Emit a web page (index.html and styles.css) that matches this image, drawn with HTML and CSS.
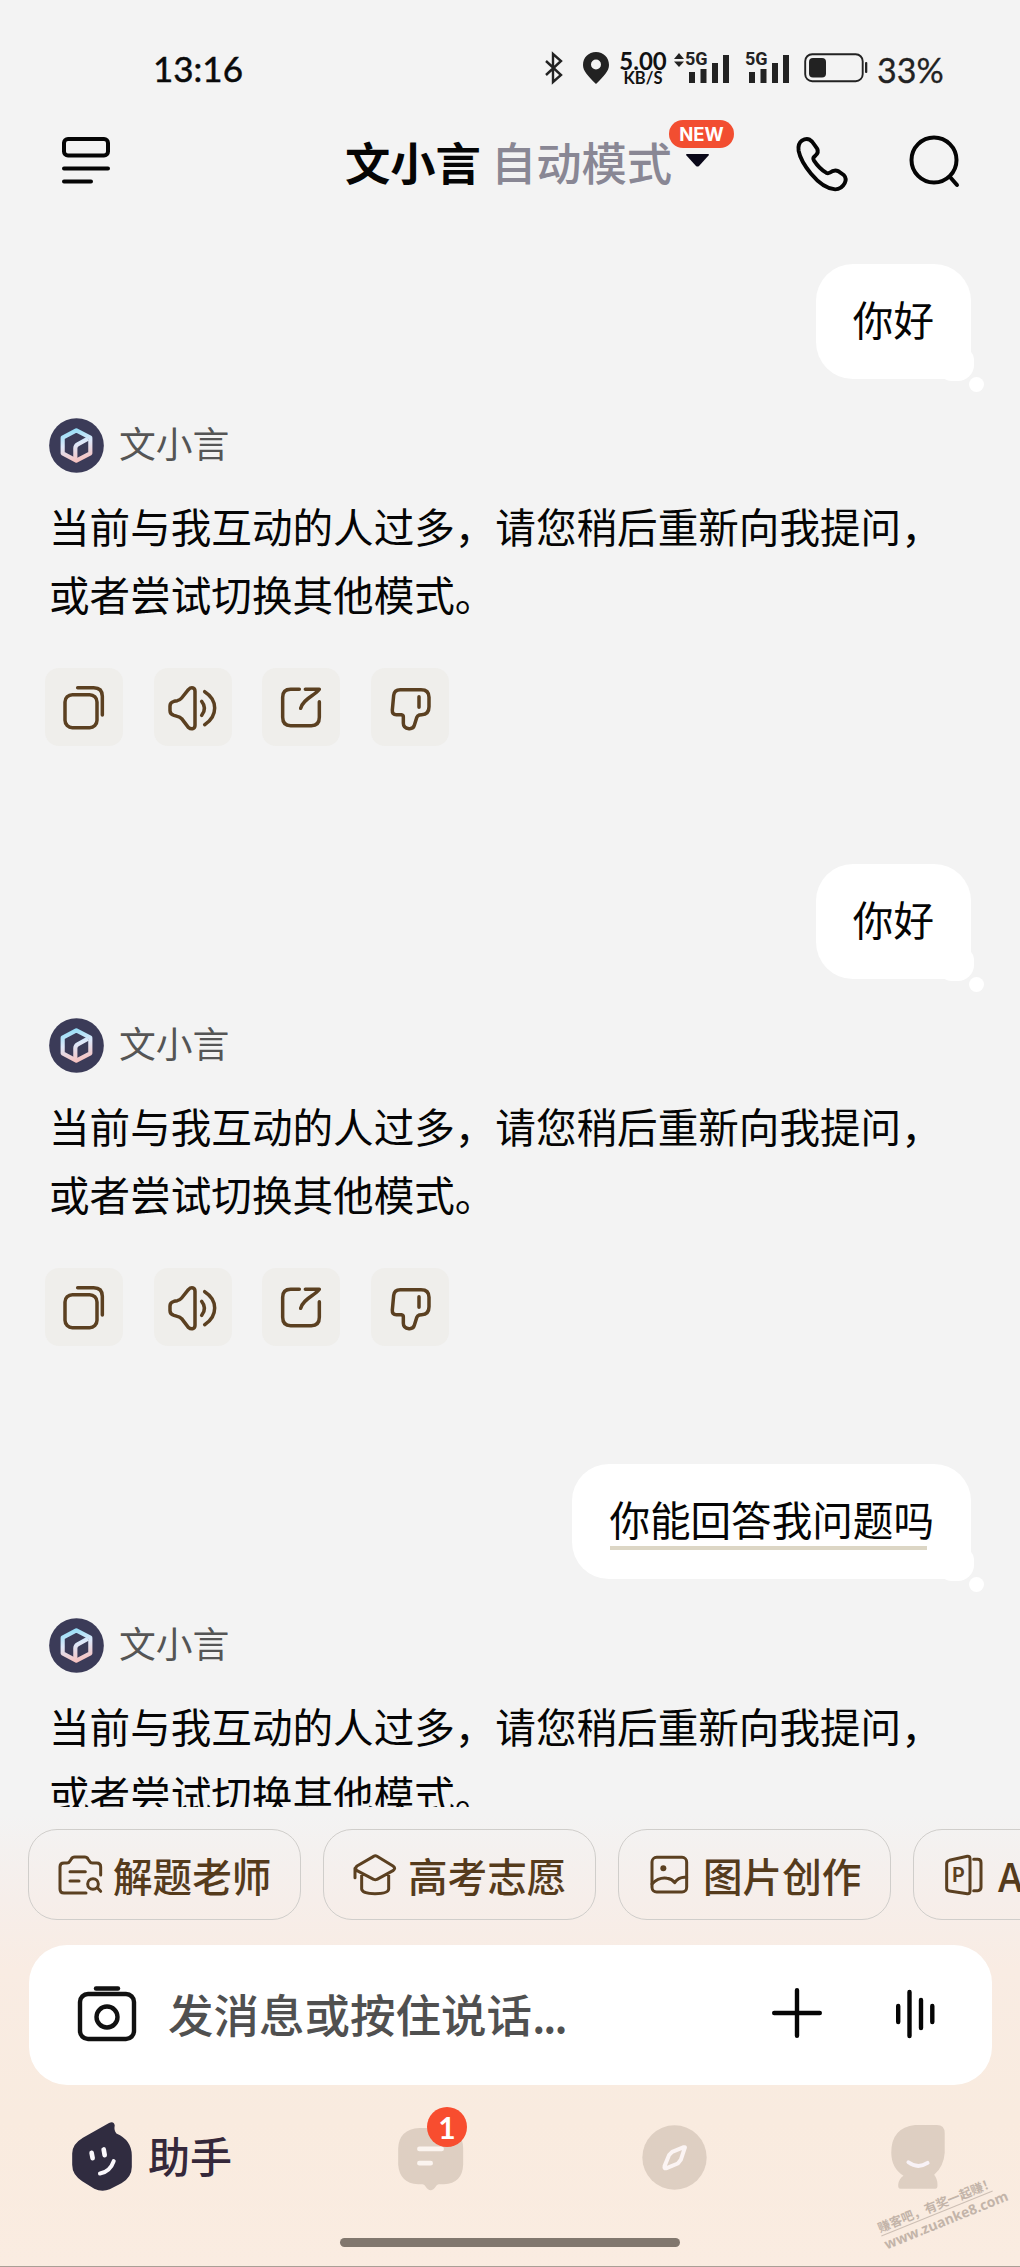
FILE: index.html
```html
<!DOCTYPE html>
<html lang="zh-CN">
<head>
<meta charset="utf-8">
<title>文小言</title>
<link rel="stylesheet" href="styles.css">
</head>
<body>
<svg class="defs" aria-hidden="true">
  <defs>
    <linearGradient id="logo-tint" gradientUnits="userSpaceOnUse" x1="70" y1="30" x2="95" y2="135">
      <stop offset="0" stop-color="#8edcf6"/><stop offset=".45" stop-color="#dfe9fa"/><stop offset="1" stop-color="#f9bdb8"/>
    </linearGradient>
    <symbol id="logo" viewBox="0 0 165 165">
      <circle cx="82.500" cy="82.500" r="82" fill="#3b3b58"/>
      <g fill="none" stroke="url(#logo-tint)" stroke-width="12.500" stroke-linejoin="round" stroke-linecap="round">
        <path d="M82 37 L124 59 V106 L82 128 L41 106 V59 Z"/>
        <path stroke-linecap="butt" d="M117 62 L86 79 Q79 83 79 91 V128"/>
      </g>
    </symbol>
    <symbol id="copy" viewBox="0 0 234 234"><rect x="60" y="80" width="96" height="99" rx="22"/><path d="M98 59 H146 Q172 59 172 85 V141"/></symbol>
    <symbol id="speaker" viewBox="0 0 234 234"><path d="M60 100 L70 98 Q78 96 83 90 L103 65 Q110 58 117 60 Q123 62 123 70 V172 Q123 180 117 182 Q110 184 103 178 L83 152 Q78 147 70 145 L60 142 Q48 138 48 128 V114 Q48 103 60 100Z M143 100 Q160 121 143 142 M152 71 Q182 90 182 120 Q182 151 152 170"/></symbol>
    <symbol id="share" viewBox="0 0 234 234"><path d="M112 64 H86 Q62 64 62 88 V148 Q62 173 86 173 H148 Q172 173 172 148 V101 M130 64 H172 C158 84 123 92 116 121"/></symbol>
    <symbol id="dislike" viewBox="0 0 234 234"><path d="M88 65 H150 Q174 65 174 88 V116 Q174 139 152 140 L145 141 Q139 143 137 149 L130 172 Q127 183 114 182 Q97 181 97 166 V146 Q97 141 91 140 H76 Q63 140 64 126 L68 82 Q70 65 88 65Z M144 86 V118"/></symbol>
    <symbol id="bars" viewBox="0 0 44 34">
      <path d="M4 21h6v11h-6z M15.500 18h6v14h-6z M27 12h6v20h-6z M38 4h6v28h-6z"/>
    </symbol>
  </defs>
</svg>

<div class="screen">
  <div class="status">
    <span class="clock">13:16</span>
    <div class="indicators">
      <svg class="bluetooth" viewBox="0 0 22 34"><path d="M3 10 L18 24 L10 31 V3 L18 10 L3 24"/></svg>
      <svg class="pin" viewBox="0 0 26 32"><path fill-rule="evenodd" d="M13 0 C5.500 0 0 5.500 0 13 C0 19 5 24 13 32 C21 24 26 19 26 13 C26 5.500 20.500 0 13 0Z M13 7.500 A5 5 0 1 1 13 17.500 A5 5 0 1 1 13 7.500Z"/></svg>
      <span class="speed"><b>5.00</b><small>KB/S</small></span>
      <svg class="updown" viewBox="0 0 10 14"><path d="M5 0 L10 6 H0Z M0 8.500 H10 L5 14Z"/></svg>
      <span class="signal"><svg><use href="#bars"/></svg><i>5G</i></span>
      <span class="signal second"><svg><use href="#bars"/></svg><i>5G</i></span>
      <svg class="battery" viewBox="0 0 64 30"><rect x="1.200" y="1.200" width="57.500" height="27" rx="7" fill="none" stroke="#222" stroke-width="1.900"/><rect x="5" y="5" width="17" height="19.500" rx="4"/><rect x="61" y="9" width="2.300" height="11" rx="1"/></svg>
      <span class="percent">33%</span>
    </div>
  </div>

  <header class="topbar">
    <svg class="menu" viewBox="0 0 48 48"><rect x="2" y="2" width="44" height="16.500" rx="4"/><path d="M2 31.500H46 M2 44.500H29"/></svg>
    <h1 class="title"><span>文小言</span><span class="mode">自动模式</span></h1>
    <div class="switcher"><svg viewBox="0 0 23 13"><path d="M0 1 Q0 0 1 0 H22 Q23 0 23 1 L13 12 Q11.500 13 10 12Z"/></svg><em>NEW</em></div>
    <svg class="phone" viewBox="3 3 156 168"><path d="M8 42 Q5 20 18 11 Q36 -1 49 14 Q56 23 65 36 Q70 47 60 56 L55 61 Q51 65 55 72 Q71 96 92 109 Q98 112 103 109 Q116 99 129 104 L146 116 Q156 127 149 141 Q139 160 120 160 Q83 157 46 112 Q14 73 8 42Z"/></svg>
    <svg class="search" viewBox="0 0 52 54"><circle cx="25" cy="25" r="22.500"/><path d="M41 42 L48 50"/></svg>
  </header>

  <main class="chat">
    <section class="turn">
      <div class="bubble"><span>你好</span></div>
      <div class="author"><svg><use href="#logo"/></svg><span>文小言</span></div>
      <p class="reply">当前与我互动的人过多，请您稍后重新向我提问，<br>或者尝试切换其他模式。</p>
      <div class="actions">
        <button><svg><use href="#copy"/></svg></button><button><svg><use href="#speaker"/></svg></button><button><svg><use href="#share"/></svg></button><button><svg><use href="#dislike"/></svg></button>
      </div>
    </section>
    <section class="turn">
      <div class="bubble"><span>你好</span></div>
      <div class="author"><svg><use href="#logo"/></svg><span>文小言</span></div>
      <p class="reply">当前与我互动的人过多，请您稍后重新向我提问，<br>或者尝试切换其他模式。</p>
      <div class="actions">
        <button><svg><use href="#copy"/></svg></button><button><svg><use href="#speaker"/></svg></button><button><svg><use href="#share"/></svg></button><button><svg><use href="#dislike"/></svg></button>
      </div>
    </section>
    <section class="turn">
      <div class="bubble"><span class="marked">你能回答我问题吗</span></div>
      <div class="author"><svg><use href="#logo"/></svg><span>文小言</span></div>
      <p class="reply">当前与我互动的人过多，请您稍后重新向我提问，<br>或者尝试切换其他模式。</p>
    </section>
  </main>

  <div class="chips">
    <div class="chip"><svg viewBox="0 0 144 120"><path d="M84 114 H18 Q6 114 6 102 V35 Q6 24 18 24 H27 Q33 24 36 18 L40 12 Q43 6 50 6 H80 Q87 6 90 12 L94 18 Q97 24 103 24 H116 Q128 24 128 36 V60 M36 50 H82 M36 78 H63 M119 99 L128 109"/><circle cx="105" cy="87" r="16"/></svg><span>解题老师</span></div>
    <div class="chip"><svg viewBox="0 0 144 120"><path d="M62 4 Q67 1 72 4 L120 33 Q130 40 120 47 L72 73 Q67 76 62 73 L12 47 Q4 40 12 33Z M6 40 V68 M26 60 V102 Q28 116 66 116 Q106 116 107 102 V60"/></svg><span>高考志愿</span></div>
    <div class="chip"><svg viewBox="0 0 144 120"><rect x="12" y="7" width="104" height="104" rx="14"/><path d="M12 87 Q33 66 57 70 Q72 72 80 83 Q92 64 116 67"/><circle class="dot" cx="46" cy="40" r="9"/></svg><span>图片创作</span></div>
    <div class="chip"><svg viewBox="0 0 144 120"><path d="M19 16 L73 4 Q81 3 81 11 V109 Q81 117 73 116 L19 108 Q11 107 11 99 V26 Q11 18 19 16Z M92 13 H104 Q114 13 114 23 V97 Q114 107 104 107 H92"/><text x="28" y="80">P</text></svg><span>AI PPT</span></div>
  </div>

  <div class="input">
    <svg class="camera" viewBox="0 0 58 56"><path d="M18 2.500H40" /><rect x="2" y="8" width="54" height="45" rx="8"/><circle cx="29" cy="31" r="10.500"/></svg>
    <span class="hint">发消息或按住说话<i>...</i></span>
    <svg class="plus" viewBox="0 0 50 50"><path d="M25 2.200V47.800 M2.200 25H47.800"/></svg>
    <svg class="wave" viewBox="0 0 39 50"><path d="M2.200 17V33 M13.500 3V47 M25 11V39 M36.300 17V33"/></svg>
  </div>

  <nav class="tabs">
    <div class="tab active">
      <svg viewBox="0 0 178 206"><path fill="#302c40" d="M110 3 Q124 -4 127 10 Q124 26 132 34 Q178 54 178 100 V134 Q178 164 147 183 L112 201 Q88 210 66 199 L30 177 Q0 158 0 128 V94 Q0 66 32 47Z"/><g fill="none" stroke="#faf8fc" stroke-width="14" stroke-linecap="round"><path d="M58 92 L61 108 M94 82 L97 99"/><path stroke-width="12" d="M124 117 Q113 149 83 154"/></g></svg>
      <span>助手</span>
    </div>
    <div class="tab message">
      <svg viewBox="0 0 198 190"><path fill="#decfc2" d="M64 0 H134 Q196 4 196 62 V110 Q194 166 138 170 H122 Q116 171 114 176 Q106 188 98 188 Q90 188 82 176 Q80 171 74 170 H60 Q4 166 0 110 V62 Q2 4 64 0Z"/><path stroke="#fbf4ef" stroke-width="14" stroke-linecap="round" d="M64 63H131 M64 106H98"/></svg>
      <span class="badge">1</span>
    </div>
    <div class="tab compass"><svg viewBox="0 0 196 196"><circle cx="98" cy="98" r="97" fill="#decfc2"/><path fill="none" stroke="#fbf4f3" stroke-width="12" stroke-linejoin="round" d="M129 69 Q131 66 126 67 L91 81 L82 90 L68 124 Q66 133 74 130 L108 116 L117 105Z"/></svg></div>
    <div class="tab profile"><svg viewBox="0 0 162 194"><path fill="#decfc2" d="M72 0 H138 Q162 0 162 25 V84 Q159 126 130 151 Q140 164 140 180 Q141 193 133 193 H28 Q20 193 21 180 Q24 162 37 154 Q0 130 0 84 Q0 8 72 0Z"/><path fill="none" stroke="#f8f2f6" stroke-width="12" stroke-linecap="round" d="M52 113 Q80 134 110 115"/></svg></div>
  </nav>
  <div class="home"></div>
  <div class="watermark"><span>赚客吧，有奖一起赚！</span><span class="site">www.zuanke8.com</span></div>
</div>
</body>
</html>
```

FILE: styles.css
```css
* { box-sizing: border-box; }
body { margin: 0; background: #f3f3f3; font-family: "Noto Sans CJK SC", sans-serif; color: #050505; }
svg { display: block; flex: none; overflow: visible; }
.defs { position: absolute; width: 0; height: 0; }

.screen {
  position: relative;
  display: flex;
  flex-direction: column;
  width: 1020px;
  height: 2267px;
  overflow: hidden;
  border-bottom: 1px solid #aa9f96;
  background: linear-gradient(#f3f3f3 0, #f3f3f3 1815px, #f6eeea 1900px, #f9ece3 1970px, #f9ebdf 2120px, #faece1 2267px);
}

/* status bar */
.status { display: flex; align-items: center; height: 136px; padding-left: 153px; font-family: Lato, sans-serif; color: #222; }
.clock { width: 390px; margin-top: -1px; font-size: 35px; line-height: 40px; color: #0a0a0a; -webkit-text-stroke: .5px; }
.indicators { display: flex; align-items: center; fill: #222; }
.bluetooth { width: 22px; height: 34px; fill: none; stroke: #222; stroke-width: 2.4; }
.pin { width: 26px; height: 32px; margin-left: 18px; }
.speed { display: flex; flex-direction: column; align-items: center; width: 50px; margin: 1px 0 0 9px; color: #111; }
.speed b { font-size: 24px; line-height: 20px; font-weight: 700; }
.speed small { font-size: 16.5px; line-height: 15px; font-weight: 700; }
.updown { width: 10px; height: 14px; margin: 0 0 17px 6px; }
.signal { position: relative; width: 44px; height: 34px; margin-left: 1px; }
.signal.second { margin-left: 16px; }
.signal svg { width: 44px; height: 34px; }
.signal i { position: absolute; left: 0; top: -1px; font: 700 18px/18px Roboto, sans-serif; }
.battery { width: 64px; height: 30px; margin-left: 15px; }
.percent { margin: 3px 0 0 9px; font-size: 34px; line-height: 36px; -webkit-text-stroke: .3px; }

/* title bar */
.topbar { display: flex; align-items: flex-start; height: 108px; padding-left: 62px; }
.menu { width: 48px; height: 48px; margin-top: 1px; fill: none; stroke: #050505; stroke-width: 4; stroke-linecap: round; }
.title { display: flex; gap: 11px; width: 329px; margin: -3px 0 0 236px; font-size: 45.3px; line-height: 56px; font-weight: 700; white-space: nowrap; }
.title span { margin-left: -1px; }
.mode { color: #898794; font-weight: 500; }
.switcher { position: relative; width: 23px; height: 13px; margin: 18px 0 0 11px; fill: #090718; }
.switcher svg { width: 23px; height: 13px; }
.switcher em { position: absolute; left: -17px; top: -34px; width: 65px; height: 28px; border-radius: 14px; background: #f24e31; color: #fff; font: 700 18.5px/29px Inter, sans-serif; text-align: center; }
.phone { width: 51px; height: 55px; margin: 2px 0 0 88px; fill: none; stroke: #050505; stroke-width: 12; stroke-linejoin: round; }
.search { width: 52px; height: 54px; margin: -1px 0 0 61px; fill: none; stroke: #050505; stroke-width: 4; stroke-linecap: round; }

/* conversation */
.chat { height: 1563px; padding-top: 20px; overflow: hidden; }
.turn { display: flex; flex-direction: column; height: 600px; padding: 0 49px; }
.bubble { position: relative; align-self: flex-end; height: 115px; padding: 0 37px; border-radius: 37px; border-bottom-right-radius: 20px; background: #fff; font-size: 40.6px; line-height: 110px; }
.bubble::before { content: ""; position: absolute; right: -3px; bottom: -2px; width: 36px; height: 32px; border-radius: 14px 10px 16px 14px; background: #fff; }
.bubble::after { content: ""; position: absolute; right: -13px; bottom: -13px; width: 15px; height: 15px; border-radius: 50%; background: #fff; }
.bubble span { position: relative; display: block; }
.marked::after { content: ""; position: absolute; left: 1px; right: 7px; top: 82px; height: 4px; background: #dcd6c5; }
.author { display: flex; align-items: center; gap: 15px; height: 55px; margin-top: 39px; font-size: 36.8px; line-height: 55px; color: #555; }
.author svg { width: 55px; height: 55px; }
.author span { margin-top: -6px; }
.reply { margin: 19px 0 0; font-size: 40.6px; line-height: 67.8px; white-space: nowrap; }
.actions { display: flex; gap: 30.5px; margin: 40px 0 0 -4px; }
.actions button { width: 78px; height: 78px; padding: 0; border: 0; border-radius: 14px; background: #efeeeb; }
.actions svg { width: 78px; height: 78px; fill: none; stroke: #5b4021; stroke-width: 10.5; stroke-linecap: round; stroke-linejoin: round; }

/* shortcuts */
.chips { display: flex; flex: none; gap: 22px; height: 91px; margin-top: 22px; padding-left: 28px; }
.chip { display: flex; flex: none; align-items: center; gap: 7px; width: 273px; height: 91px; padding-left: 29px; border: 1px solid #d0cecb; border-radius: 29px; color: #553b1c; font-size: 39.6px; font-weight: 500; line-height: 80px; white-space: nowrap; }
.chip svg { width: 48px; height: 40px; fill: none; stroke: #5b4021; stroke-width: 9; stroke-linecap: round; stroke-linejoin: round; }
.chip .dot { fill: #5b4021; stroke: none; }
.chip text { font: 700 58px Roboto, sans-serif; fill: #5b4021; stroke: none; }

/* message box */
.input { display: flex; flex: none; align-items: center; height: 140px; margin: 25px 28px 0 29px; padding: 0 57px 0 49px; border-radius: 38px; background: #fff; }
.camera { width: 58px; height: 56px; margin-top: -3px; fill: none; stroke: #111; stroke-width: 4.4; stroke-linecap: round; }
.hint { flex: 1; margin: -4px 0 0 32px; color: #505050; font-size: 45.5px; line-height: 70px; font-weight: 500; white-space: nowrap; }
.hint i { font-style: normal; letter-spacing: -2.5px; }
.plus { width: 50px; height: 50px; margin-top: -4px; }
.wave { width: 39px; height: 50px; margin: -3px 0 0 74px; }
.plus, .wave { fill: none; stroke: #050505; stroke-width: 4.4; stroke-linecap: round; }

/* bottom navigation */
.tabs { display: flex; flex: none; align-items: flex-start; height: 153px; padding: 37px 75px 0 72px; }
.active { display: flex; align-items: center; gap: 16px; width: 326px; color: #35283a; font-size: 42px; line-height: 60px; font-weight: 500; }
.active svg { width: 60px; height: 69px; }
.active span { margin-top: -3px; }
.message { position: relative; width: 244px; margin-top: 6px; }
.message svg { width: 66px; height: 63px; }
.badge { position: absolute; left: 29px; top: -21px; width: 40px; height: 40px; border-radius: 50%; background: #f84d2f; color: #fff; font: 700 30px/41px Lato, sans-serif; text-align: center; }
.compass { width: 249px; margin-top: 3px; }
.compass svg { width: 65px; height: 65px; }
.profile { margin-top: 3px; }
.profile svg { width: 54px; height: 64px; }
.home { flex: none; width: 340px; height: 9px; margin-left: 340px; border-radius: 5px; background: #81776e; }

.watermark { position: absolute; left: 877px; top: 2196px; width: 120px; color: #c3b4a9; transform: rotate(-22deg); font-size: 12.5px; font-weight: 700; line-height: 17px; white-space: nowrap; }
.watermark span { display: block; }
.watermark .site { border-top: 1px solid #cdbfb4; font: 700 14px/17px "Open Sans", sans-serif; }
```
